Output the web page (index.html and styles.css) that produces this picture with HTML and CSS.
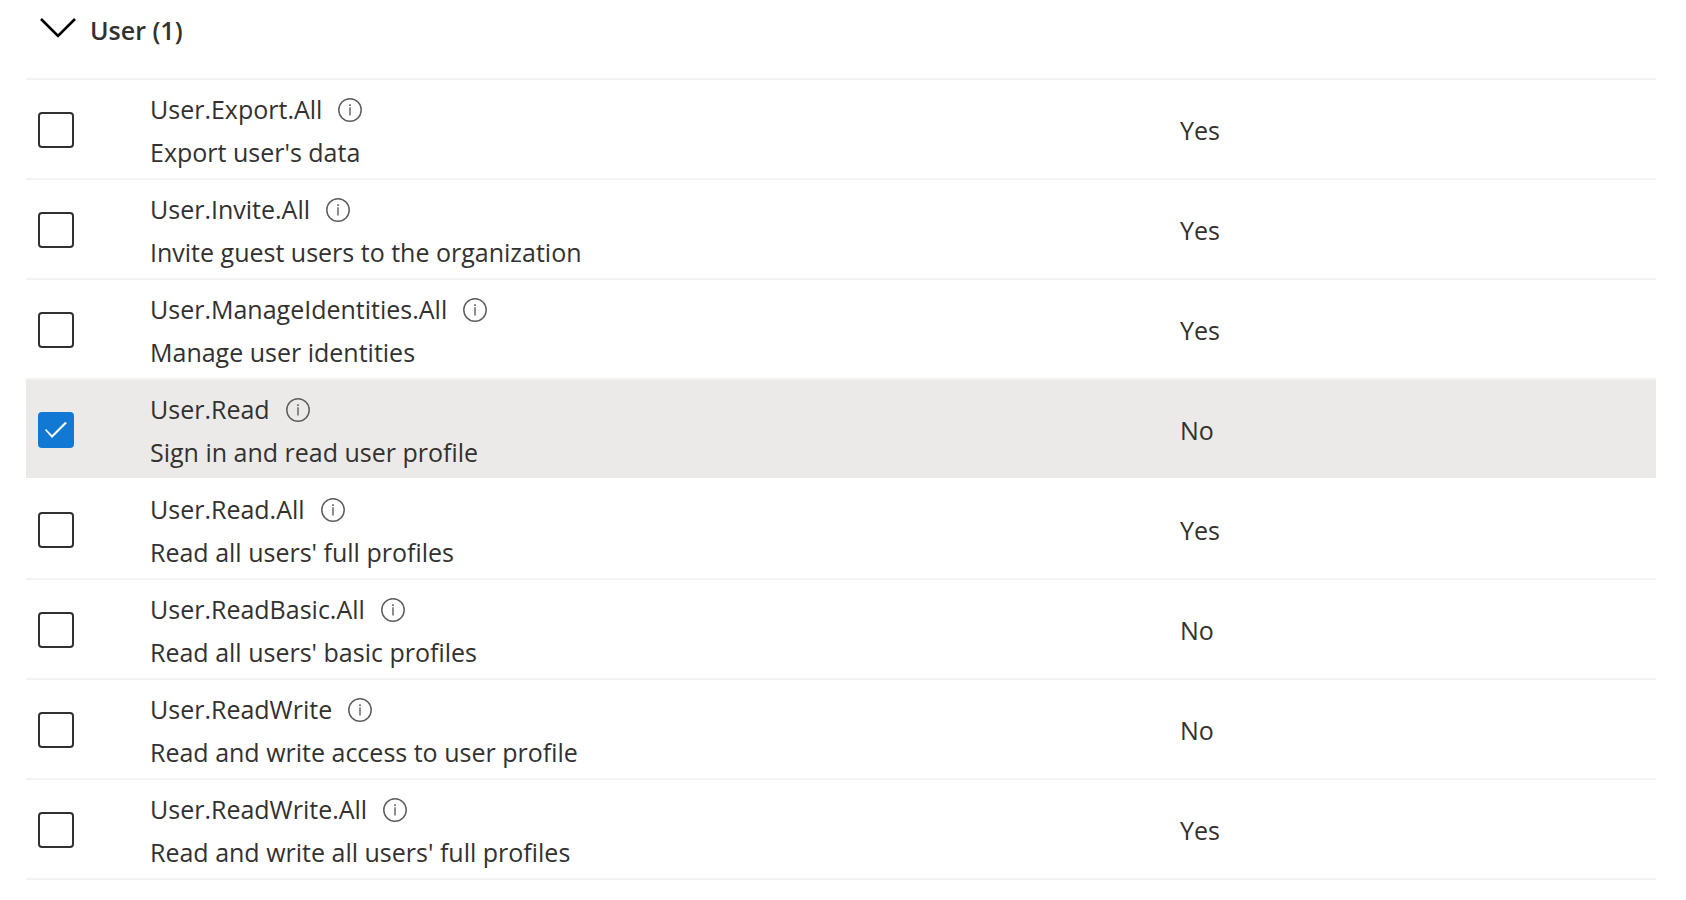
FILE: index.html
```html
<!DOCTYPE html>
<html lang="en">
<head>
<meta charset="utf-8">
<title>Permissions</title>
<link rel="stylesheet" href="styles.css">
</head>
<body>
<svg class="defs" aria-hidden="true">
  <symbol id="info" viewBox="0 0 24 24">
    <circle cx="12" cy="12" r="11.2" fill="none" stroke="currentColor" stroke-width="1.5"/>
    <path d="M11.2 6.3h1.6v1.7h-1.6zM11.3 9.3h1.4v8.3h-1.4z" fill="currentColor"/>
  </symbol>
</svg>
<main class="permissions">
  <h2 class="group">
    <button class="group-toggle" type="button" aria-expanded="true">
      <svg class="chevron" viewBox="0 0 36 20" aria-hidden="true"><path d="M1 1l17 17L35 1" fill="none" stroke="#000" stroke-width="2.6"/></svg>
      User (1)
    </button>
  </h2>
  <table class="list">
    <tbody>
      <tr class="row">
        <td class="check"><input class="box" type="checkbox" id="p1"></td>
        <td class="detail"><div class="name"><label for="p1">User.Export.All</label><button class="info" type="button" aria-label="More information"><svg class="info-icon"><use href="#info"/></svg></button></div><div class="text">Export user's data</div></td>
        <td class="consent">Yes</td>
      </tr>
      <tr class="row">
        <td class="check"><input class="box" type="checkbox" id="p2"></td>
        <td class="detail"><div class="name"><label for="p2">User.Invite.All</label><button class="info" type="button" aria-label="More information"><svg class="info-icon"><use href="#info"/></svg></button></div><div class="text">Invite guest users to the organization</div></td>
        <td class="consent">Yes</td>
      </tr>
      <tr class="row">
        <td class="check"><input class="box" type="checkbox" id="p3"></td>
        <td class="detail"><div class="name"><label for="p3">User.ManageIdentities.All</label><button class="info" type="button" aria-label="More information"><svg class="info-icon"><use href="#info"/></svg></button></div><div class="text">Manage user identities</div></td>
        <td class="consent">Yes</td>
      </tr>
      <tr class="row selected">
        <td class="check"><input class="box" type="checkbox" id="p4" checked></td>
        <td class="detail"><div class="name"><label for="p4">User.Read</label><button class="info" type="button" aria-label="More information"><svg class="info-icon"><use href="#info"/></svg></button></div><div class="text">Sign in and read user profile</div></td>
        <td class="consent">No</td>
      </tr>
      <tr class="row">
        <td class="check"><input class="box" type="checkbox" id="p5"></td>
        <td class="detail"><div class="name"><label for="p5">User.Read.All</label><button class="info" type="button" aria-label="More information"><svg class="info-icon"><use href="#info"/></svg></button></div><div class="text">Read all users' full profiles</div></td>
        <td class="consent">Yes</td>
      </tr>
      <tr class="row">
        <td class="check"><input class="box" type="checkbox" id="p6"></td>
        <td class="detail"><div class="name"><label for="p6">User.ReadBasic.All</label><button class="info" type="button" aria-label="More information"><svg class="info-icon"><use href="#info"/></svg></button></div><div class="text">Read all users' basic profiles</div></td>
        <td class="consent">No</td>
      </tr>
      <tr class="row">
        <td class="check"><input class="box" type="checkbox" id="p7"></td>
        <td class="detail"><div class="name"><label for="p7">User.ReadWrite</label><button class="info" type="button" aria-label="More information"><svg class="info-icon"><use href="#info"/></svg></button></div><div class="text">Read and write access to user profile</div></td>
        <td class="consent">No</td>
      </tr>
      <tr class="row">
        <td class="check"><input class="box" type="checkbox" id="p8"></td>
        <td class="detail"><div class="name"><label for="p8">User.ReadWrite.All</label><button class="info" type="button" aria-label="More information"><svg class="info-icon"><use href="#info"/></svg></button></div><div class="text">Read and write all users' full profiles</div></td>
        <td class="consent">Yes</td>
      </tr>
    </tbody>
  </table>
</main>
</body>
</html>
```
FILE: styles.css
```css
* { box-sizing: border-box; }
body {
  margin: 0;
  background: #fff;
  color: #323130;
  font-family: "Segoe UI", "Open Sans", sans-serif;
  font-size: 25px;
  line-height: 43px;
}
.defs { position: absolute; width: 0; height: 0; }
.permissions { padding: 0 30px 0 26px; }
.group { margin: 0; padding: 9px 0 26px 14px; font-size: 25px; }
.group-toggle {
  display: flex;
  align-items: center;
  gap: 14px;
  padding: 0;
  border: 0;
  background: none;
  color: inherit;
  font: inherit;
  font-weight: 600;
}
.chevron { width: 36px; height: 20px; margin-bottom: 6px; }
.list {
  width: 100%;
  border-collapse: separate;
  border-spacing: 0;
  table-layout: fixed;
  border-top: 2px solid #f3f2f1;
}
.row td { padding: 2px 0 0; border-bottom: 2px solid #f3f2f1; background-clip: padding-box; }
.row .check { width: 124px; padding-left: 12px; vertical-align: middle; }
.row .detail { padding: 8px 0 4px; }
.row .consent { width: 29.2%; }
.selected td { background-color: #ebeae8; }
.row.selected td { border-bottom-color: #fff; }
.box {
  appearance: none;
  display: grid;
  place-items: center;
  width: 36px;
  height: 36px;
  margin: 0;
  border: 2px solid #323130;
  border-radius: 4px;
  background: #fff;
}
.box:checked { border-color: #1179d4; background: #1179d4; }
.box:checked::before {
  content: "";
  width: 22px;
  height: 16px;
  background: #fff;
  clip-path: polygon(0 8px, 1px 7px, 7px 13px, 20px 0, 22px 1px, 7px 16px);
}
.name { display: flex; align-items: center; gap: 16px; }
.info { display: flex; padding: 0; border: 0; background: none; color: #605e5c; }
.info-icon { width: 24px; height: 24px; }
```
